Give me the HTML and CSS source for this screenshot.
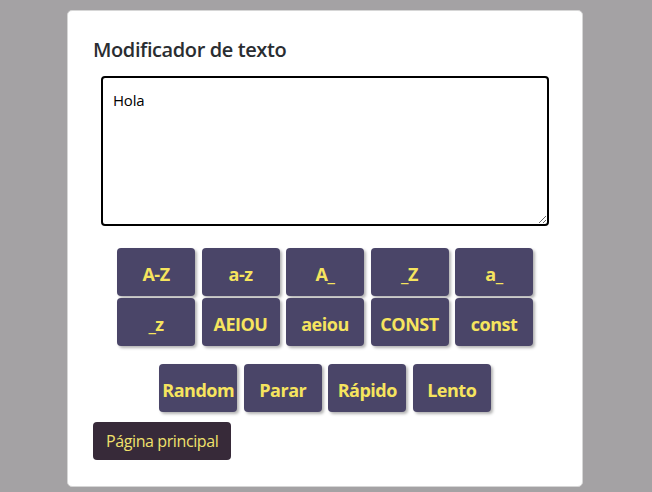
FILE: index.html
```html
<!DOCTYPE html>
<html lang="es">
<head>
<meta charset="utf-8">
<title>Modificador de texto</title>
<link rel="stylesheet" href="styles.css">
</head>
<body>
<main class="card">
  <h1 class="title">Modificador de texto</h1>
  <textarea class="input">Hola</textarea>
  <div class="grid">
    <button class="btn">A-Z</button>
    <button class="btn">a-z</button>
    <button class="btn">A_</button>
    <button class="btn">_Z</button>
    <button class="btn">a_</button>
    <button class="btn">_z</button>
    <button class="btn">AEIOU</button>
    <button class="btn">aeiou</button>
    <button class="btn">CONST</button>
    <button class="btn">const</button>
  </div>
  <div class="row">
    <button class="btn">Random</button>
    <button class="btn">Parar</button>
    <button class="btn">Rápido</button>
    <button class="btn">Lento</button>
  </div>
  <button class="home">Página principal</button>
</main>
</body>
</html>
```
FILE: styles.css
```css
html, body {
  margin: 0;
  padding: 0;
}
body {
  background: #a4a2a4;
  font-family: "Open Sans", "Noto Sans", sans-serif;
  height: 492px;
  overflow: hidden;
}
.card {
  box-sizing: border-box;
  margin: 10px 0 0 67px;
  width: 516px;
  height: 477px;
  background: #fff;
  border: 1px solid #d6d6d6;
  border-radius: 5px;
  padding: 25px 25px 0 25px;
  display: flex;
  flex-direction: column;
}
.title {
  margin: 0;
  font-size: 20px;
  font-weight: 600;
  color: #2a2d31;
  line-height: 27px;
  letter-spacing: -0.4px;
}
.input {
  box-sizing: border-box;
  margin: 13px 0 0 8px;
  width: 448px;
  height: 150px;
  border: 2px solid #000;
  border-radius: 4px;
  padding: 12px 10px 11px;
  font-family: "Open Sans", "Noto Sans", sans-serif;
  font-size: 15px;
  color: #000;
  resize: vertical;
  letter-spacing: -0.2px;
}
.grid {
  margin-top: 22px;
  display: grid;
  grid-template-columns: repeat(5, 78px);
  column-gap: 6.5px;
  row-gap: 2px;
  justify-content: center;
}
.row {
  margin-top: 18px;
  display: flex;
  gap: 6.5px;
  justify-content: center;
}
.btn {
  box-sizing: border-box;
  width: 78px;
  height: 48px;
  padding: 4px 0 0;
  border: none;
  border-radius: 4px;
  background: #4a4568;
  color: #f6e45e;
  font-family: "Open Sans", "Noto Sans", sans-serif;
  font-weight: 700;
  font-size: 18px;
  letter-spacing: -0.5px;
  box-shadow: 2px 2px 3px rgba(0, 0, 0, 0.3);
  white-space: nowrap;
  overflow: visible;
}
.home {
  align-self: flex-start;
  margin-top: 10px;
  height: 38px;
  padding: 0 13px;
  border: none;
  border-radius: 4px;
  background: #372a39;
  color: #f0e16c;
  font-family: "Open Sans", "Noto Sans", sans-serif;
  font-size: 16px;
  letter-spacing: -0.4px;
}
```
